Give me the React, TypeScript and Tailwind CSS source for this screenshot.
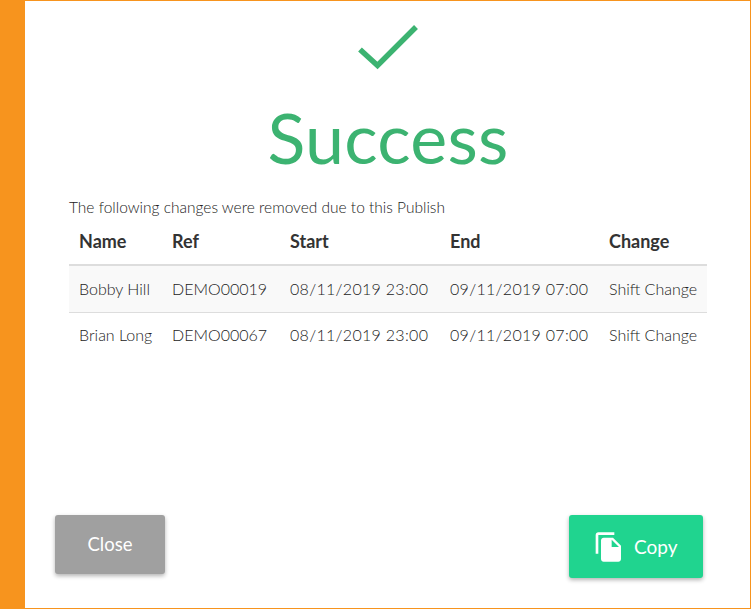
const rows = [
  { name: "Bobby Hill", ref: "DEMO00019", start: "08/11/2019 23:00", end: "09/11/2019 07:00", change: "Shift Change" },
  { name: "Brian Long", ref: "DEMO00067", start: "08/11/2019 23:00", end: "09/11/2019 07:00", change: "Shift Change" },
];

const headers = ["Name", "Ref", "Start", "End", "Change"];

export default function App() {
  return (
    <div className="flex h-[609px] w-[751px] border border-[#f7941e] bg-white font-['Lato',sans-serif] text-[#333]">
      <div className="w-[24px] shrink-0 bg-[#f7941e]" />
      <div className="flex min-w-0 flex-1 flex-col">
        <div className="flex flex-col items-center pt-[23px]">
          <svg width="60" height="48" viewBox="0 0 60 48" className="ml-[1px]" fill="none">
            <path d="M2 25.5L19.5 41.5L58 3" stroke="#3cb371" strokeWidth="5.5" />
          </svg>
          <h1 className="mt-[17px] ml-[1px] text-[70px] leading-[96px] font-normal tracking-[0.2px] text-[#3cb371]">Success</h1>
        </div>
        <div className="pr-[43px] pl-[44px]">
          <p className="mt-[12px] text-[15.5px] leading-[20px] font-light text-[#222]">
            The following changes were removed due to this Publish
          </p>
          <table className="mt-[6px] w-[638px] table-fixed border-collapse text-[16px]">
            <colgroup>
              <col className="w-[93px]" />
              <col className="w-[118px]" />
              <col className="w-[160px]" />
              <col className="w-[159px]" />
              <col className="w-[108px]" />
            </colgroup>
            <thead>
              <tr className="h-[42px] border-b-2 border-[#ddd]">
                {headers.map((h) => (
                  <th key={h} className="pb-[5px] pl-[10px] text-left text-[18px] font-bold whitespace-nowrap">
                    {h}
                  </th>
                ))}
              </tr>
            </thead>
            <tbody className="font-light text-[#222]">
              {rows.map((r, i) => (
                <tr key={r.ref} className={i === 0 ? "h-[47px] border-b border-[#ddd] bg-[#f9f9f9]" : "h-[46px]"}>
                  <td className="pl-[10px] whitespace-nowrap">{r.name}</td>
                  <td className="pl-[10px] whitespace-nowrap">{r.ref}</td>
                  <td className="pl-[10px] tracking-[0.3px] whitespace-nowrap">{r.start}</td>
                  <td className="pl-[10px] tracking-[0.3px] whitespace-nowrap">{r.end}</td>
                  <td className="pl-[10px] whitespace-nowrap">{r.change}</td>
                </tr>
              ))}
            </tbody>
          </table>
        </div>
        <div className="mt-auto flex items-start justify-between pr-[47px] pb-[30px] pl-[30px]">
          <button className="h-[59px] w-[110px] rounded-[3px] bg-[#a0a0a0] text-[18.5px] font-normal text-white shadow-[0_2px_4px_rgba(0,0,0,0.3)]">
            Close
          </button>
          <button className="flex h-[63px] w-[134px] items-center rounded-[3px] bg-[#20d48f] pl-[24px] text-[19px] font-normal text-white shadow-[0_2px_4px_rgba(0,0,0,0.3)]">
            <svg width="32" height="32" viewBox="0 0 24 24" fill="currentColor" className="mr-[9px]">
              <path d="M16 1H4c-1.1 0-2 .9-2 2v14h2V3h12V1zm-1 4l6 6v10c0 1.1-.9 2-2 2H7.99C6.89 23 6 22.1 6 21l.01-14c0-1.1.89-2 1.99-2h7zm-1 7h5.5L14 6.5V12z" />
            </svg>
            <span className="pt-[1px]">Copy</span>
          </button>
        </div>
      </div>
    </div>
  );
}
